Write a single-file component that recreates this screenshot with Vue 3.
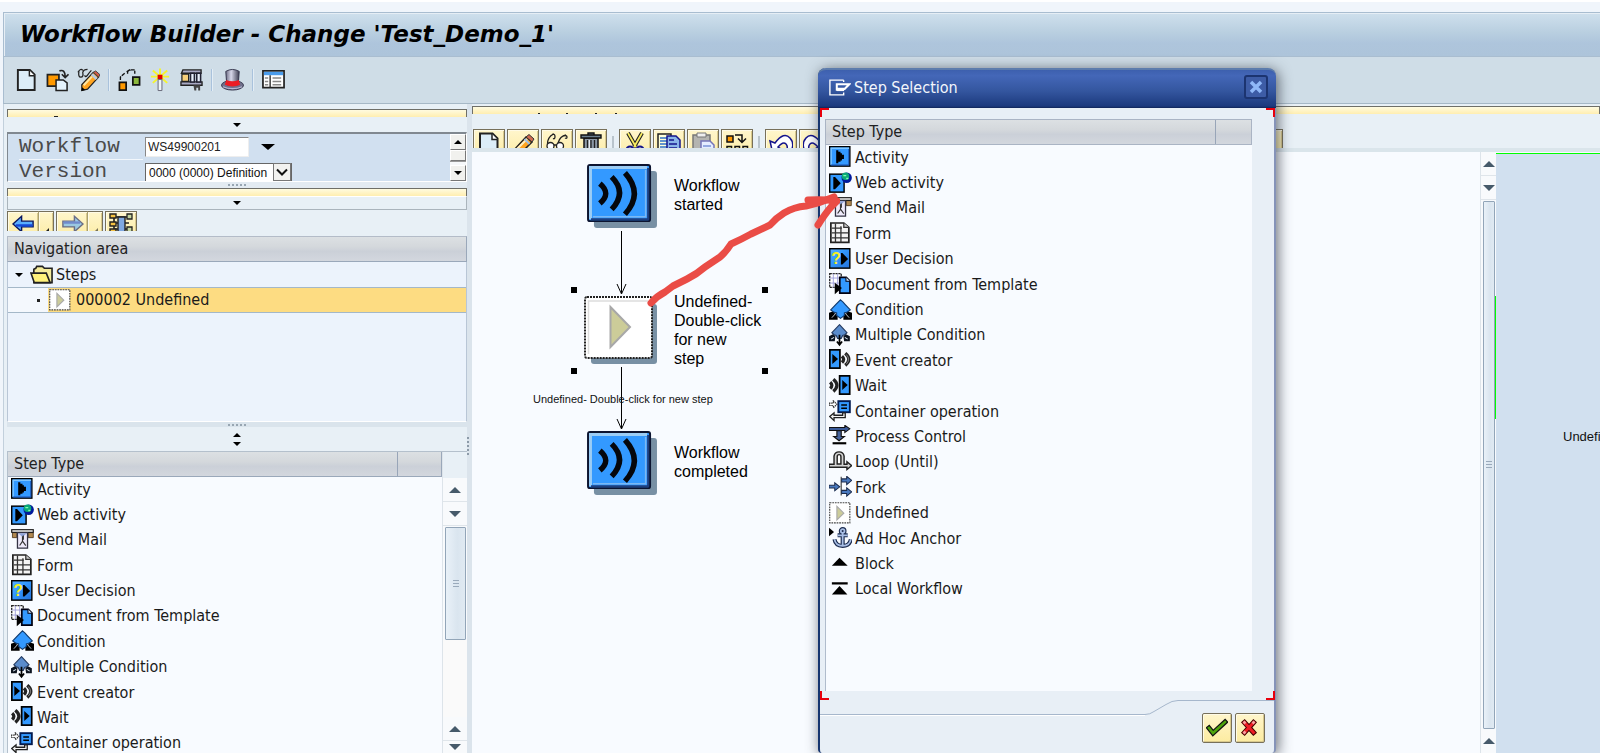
<script setup>
import { ref } from 'vue'

const steps = [
  ['activity', 'Activity'],
  ['web', 'Web activity'],
  ['mail', 'Send Mail'],
  ['form', 'Form'],
  ['decision', 'User Decision'],
  ['template', 'Document from Template'],
  ['condition', 'Condition'],
  ['multi', 'Multiple Condition'],
  ['event', 'Event creator'],
  ['wait', 'Wait'],
  ['container', 'Container operation'],
  ['process', 'Process Control'],
  ['loop', 'Loop (Until)'],
  ['fork', 'Fork'],
  ['undefined', 'Undefined'],
  ['anchor', 'Ad Hoc Anchor'],
  ['block', 'Block'],
  ['local', 'Local Workflow'],
]
const visibleSteps = steps.slice(0, 11)
const appTools = [
  ['t-new', 'Create'], ['t-copy', 'Other workflow'], ['t-edit', 'Display / Change'], null,
  ['t-graph', 'Diagram'], ['t-activate', 'Activate'], ['t-test', 'Test'], null,
  ['t-hat', 'Header data'], null, ['t-list', 'Layout'],
]
const canvasTools = [
  ['t-new', 'New'], ['c-pen', 'Change'], ['c-glasses', 'Display'], ['c-trash', 'Delete'], null,
  ['c-cut', 'Cut'], ['c-copy', 'Copy'], ['c-paste', 'Paste'], ['c-insert', 'Insert'], null,
  ['c-undo', 'Undo'], ['c-redo', 'Redo'],
]
const workflowId = ref('WS49900201')
const version = ref('0000')
</script>

<template>
  <div class="app">
    <svg class="defs" aria-hidden="true">
      <defs>
        <linearGradient id="blueBox" x1="0" y1="0" x2="1" y2="1">
          <stop offset="0" stop-color="#5cb0ff" /><stop offset=".4" stop-color="#3399ff" /><stop offset="1" stop-color="#2471d8" />
        </linearGradient>
        <linearGradient id="hatFill" x1="0" x2="1">
          <stop offset="0" stop-color="#6c6c84" /><stop offset=".4" stop-color="#d8d8ea" /><stop offset="1" stop-color="#3c3c50" />
        </linearGradient>
        <symbol id="activity" viewBox="0 0 16 16">
          <rect x=".5" y=".5" width="14" height="13.5" fill="#39f" stroke="#000" />
          <path d="M1.5 13V1.5H14" fill="none" stroke="#7cc4ff" /><path d="M1.5 13.2h12.3V2" fill="none" stroke="#1c4fae" stroke-width=".7" />
          <path d="M5 3v9h1.5v-1H8v-1h1V9h1.4V6H9V5H8V4H6.500V3z" />
        </symbol>
        <symbol id="web" viewBox="0 0 16 16">
          <rect x=".5" y="1.500" width="10" height="12.500" fill="#39f" stroke="#000" />
          <path d="M3 3.500v8.500h1.200l4-4.200-4-4.300z" />
          <circle cx="12.300" cy="4" r="3.600" fill="#001a9c" /><circle cx="11.500" cy="3" r="2.600" fill="#08a878" />
          <path d="M10 2.500h2M12 4.500h1.500" stroke="#7fffb0" />
        </symbol>
        <symbol id="mail" viewBox="0 0 16 16">
          <path d="M1 2.500h14.500V6H12V3H4v3H1z" fill="#b08850" stroke="#533a1c" stroke-width=".6" />
          <rect x=".5" y=".5" width="15" height="1.800" fill="#fff" stroke="#111" stroke-width=".8" />
          <path d="M4.500 2.500h7v10.800h-7z" fill="#eeeafb" stroke="#334" stroke-width=".9" />
          <path d="M5 3h6L8 5.500z" fill="#8fa3d8" /><path d="M8 5v3.500l-2 3M8 8.500l2.300 3M8.600 4.500v3" fill="none" stroke="#333" stroke-width=".8" />
        </symbol>
        <symbol id="form" viewBox="0 0 16 16">
          <path d="M1.300.700h9l3.500 3v10.500H1.300z" fill="#f4f4f4" stroke="#222" stroke-width="1.200" />
          <path d="M10.300.700v3h3.500" fill="#ccc" stroke="#333" stroke-width=".9" />
          <path d="M4.500 1v13M8.300 3v11M2 4.300h7M2 7.500h11.500M2 11h11.500" fill="none" stroke="#333" stroke-width=".9" />
        </symbol>
        <symbol id="decision" viewBox="0 0 16 16">
          <rect x=".5" y=".5" width="14" height="13.500" fill="url(#blueBox)" stroke="#000" />
          <path d="M8.300 3.500v8h1l4-3.800-4-4.200z" />
          <text x="1.500" y="11.200" font-family="Liberation Sans, sans-serif" font-weight="bold" font-size="11" fill="#f6f022">?</text>
        </symbol>
        <symbol id="template" viewBox="0 0 16 16">
          <rect x=".5" y=".5" width="8" height="9.500" fill="#fff" stroke="#222" stroke-width=".9" stroke-dasharray="1.500 .5" />
          <path d="M3 .5V10M6 .5V10M.5 3.500h8M.5 7h8" stroke="#9a9ad8" stroke-width=".6" />
          <path d="M7.500 3h4.500l2.600 2.600V14H7.500z" fill="#39f" stroke="#001" stroke-width="1.200" /><path d="M11.800 3v2.800h2.800" fill="#cfe4ff" stroke="#001" stroke-width=".7" />
          <path d="M4 6.800l5 3.700-5 4.300z" />
        </symbol>
        <symbol id="condition" viewBox="0 0 16 16">
          <path d="M0 9.500l3-1 1 1.500 2 .5v4H0zM16 9.500l-3-1-1 1.500-2 .5v4h6z" />
          <path d="M8 .6L9.800 2.200 11 3.500 14.800 7.600 12.300 9.300 10.700 9.700V11.500L8 13.500 5.300 11.500V9.700L3.700 9.300 1.200 7.600 5 3.500z" fill="#39f" stroke="#113a6c" stroke-width=".8" />
          <path d="M2 13l2.500-2.800M14 13l-2.500-2.800" stroke="#dce8f4" stroke-width=".6" />
        </symbol>
        <symbol id="multi" viewBox="0 0 16 16">
          <path d="M0 8.500l3-1.500 1.500 1.500L4 12H0zM14.500 8.500L11.500 7 10 8.500l.5 3.500h4z" fill="#0c1420" />
          <path d="M7.300.5L12.500 6 11 7.500 9.500 8 8.500 10H6L5 8 3.500 7.500 2 6z" fill="#5a8ccc" stroke="#233a60" stroke-width=".8" />
          <path d="M7.300 7.500v6.500M5.500 12.200L7.300 14.500 9.100 12.200" fill="none" stroke="#000" stroke-width="1.200" />
          <path d="M1.500 10.500l2-1.200M13 10.500l-2-1.200" stroke="#dce8f4" stroke-width=".7" />
        </symbol>
        <symbol id="event" viewBox="0 0 16 16">
          <rect x=".6" y=".6" width="7" height="12.700" fill="#39f" stroke="#000" stroke-width="1.200" /><path d="M2.300 3.500v7L6.300 7z" />
          <path d="M9 5q2.400 2.200 0 4.400M11.300 3q5 4.200 0 8.400" fill="none" stroke="#222" stroke-width="2.300" />
          <path d="M12 3.800q3.200 3.400 0 6.800" fill="none" stroke="#aaa" stroke-width=".5" />
        </symbol>
        <symbol id="wait" viewBox="0 0 16 16">
          <rect x="7.400" y=".6" width="7" height="12.700" fill="#39f" stroke="#000" stroke-width="1.200" /><path d="M9.200 3.500v7L13 7z" />
          <path d="M.8 5q2.400 2.200 0 4.400M3 3q5 4.200 0 8.400" fill="none" stroke="#222" stroke-width="2.300" />
        </symbol>
        <symbol id="container" viewBox="0 0 16 16">
          <rect x="6.500" y=".8" width="8" height="7.700" fill="#39f" stroke="#001a50" stroke-width="1.300" /><path d="M8.500 3.500h4M8.500 5.700h4" stroke="#000" stroke-width="1.100" />
          <path d="M0 2.200h3V.6L5.500 3 3 5.400V3.800H0z" fill="#fff" stroke="#333" stroke-width=".8" stroke-dasharray="1 .5" />
          <path d="M11.300 9v3.300H3.500v2L.5 11.500 3.500 9v1.600h6V9z" fill="#f4f4f4" stroke="#222" stroke-width=".9" />
        </symbol>
        <symbol id="process" viewBox="0 0 16 16">
          <path d="M0 1.700h11V.2l3.500 2.500L11 5.300V3.900H0z" fill="#3a5a98" stroke="#111" stroke-width=".7" />
          <path d="M5.500 4h3v4h2.200L7 11 3.300 8h2.200z" fill="#47659e" stroke="#111" stroke-width=".8" /><path d="M2.500 12.700h9.500" stroke="#000" stroke-width="1.500" />
        </symbol>
        <symbol id="loop" viewBox="0 0 16 16">
          <path d="M0 9.200h3.500V3.500Q4 .6 7 .6t3.500 2.900v5.700h2V7.500l3.300 2.700-3.300 2.700v-1.600H0z" fill="#d4d4d4" stroke="#222" stroke-width="1" />
          <path d="M5.700 9V4q0-1.500 1.300-1.500T8.300 4v5z" fill="#fff" stroke="#222" stroke-width="1" />
        </symbol>
        <symbol id="fork" viewBox="0 0 16 16">
          <path d="M8.500.5v13" stroke="#555" stroke-width=".9" />
          <path d="M0 6.500h4V4.700L7.500 7.500 4 10.200V8.400H0zM8.800 2h3.500V.2l3.500 2.900-3.500 2.900V4.200H8.800zM8.800 10h3.500V8.200l3.500 2.900-3.500 2.900v-1.800H8.800z" fill="#4a7ac0" stroke="#1c2c4c" stroke-width=".7" />
        </symbol>
        <symbol id="undefined" viewBox="0 0 16 16">
          <rect x=".5" y=".5" width="14" height="14" fill="#fff" stroke="#444" stroke-width=".8" stroke-dasharray="1.200 .6" />
          <path d="M5.500 3v9.500l4.800-4.700z" fill="#cccc99" stroke="#aaa" stroke-width=".8" />
        </symbol>
        <symbol id="anchor" viewBox="0 0 16 16">
          <path d="M0 .5v6L3.500 3.500z" />
          <g fill="none" stroke="#1c2c50" stroke-width="2.800"><circle cx="9.500" cy="2.700" r="1.300" /><path d="M9.500 4v9M6 5.800h7M3.800 8.500q.7 4.500 5.700 4.700 5-.2 5.700-4.700" /></g>
          <g fill="none" stroke="#a9bfe6" stroke-width="1.200"><circle cx="9.500" cy="2.700" r="1.300" /><path d="M9.500 4v9M6 5.800h7M3.800 8.500q.7 4.500 5.700 4.700 5-.2 5.700-4.700" /></g>
        </symbol>
        <symbol id="block" viewBox="0 0 16 16"><path d="M7.300 4L13 9.500H2z" /></symbol>
        <symbol id="local" viewBox="0 0 16 16"><path d="M2 3h11v1.600H2zM7.300 5.500L12.800 11.500H2z" /></symbol>

        <symbol id="t-new" viewBox="0 0 24 24">
          <path d="M3 1.500h12.500l5 5v16H3z" fill="#dcedf8" stroke="#222" stroke-width="2" /><path d="M15 2v5.500h5.500" fill="#fff" stroke="#222" stroke-width="1.500" />
        </symbol>
        <symbol id="t-copy" viewBox="0 0 24 24">
          <path d="M1.500 6.500h12v12h-12z" fill="#f90" stroke="#222" stroke-width="1.800" />
          <path d="M10.500 12h7.500l4 3v8H10.500z" fill="#e4f2fc" stroke="#222" stroke-width="1.600" />
          <path d="M14 2.500q6-2 6 6M16.500 6l3.500 3.500L23.500 6" fill="none" stroke="#222" stroke-width="1.700" />
        </symbol>
        <symbol id="t-edit" viewBox="0 0 24 24">
          <path d="M1 4q3-5 5-2M2 3q-1 6 2 6t2-5q1-3 5-3M8 7q1 3 3 0t4-5" fill="none" stroke="#222" stroke-width="1.300" />
          <path d="M5 17L17 4l5.500 5L11 21.500l-6 1.500z" fill="#ffa420" stroke="#222" stroke-width="1.300" />
          <path d="M17 4l2.500-1.500L24 6.500 22.500 9z" fill="#d25b48" stroke="#444" /><path d="M15.500 6l5 5" stroke="#b9cadf" stroke-width="3" /><path d="M7 17.500l8.500-9" stroke="#ffe5a0" stroke-width="2.200" /><path d="M4.500 23.500l1-4 3 3z" />
        </symbol>
        <symbol id="t-graph" viewBox="0 0 24 24">
          <path d="M1.500 14.500h7v8h-7z" fill="#f90" stroke="#111" stroke-width="1.800" /><path d="M15.500 9h7v8h-7z" fill="#8cb83c" stroke="#111" stroke-width="1.800" />
          <path d="M2.500 12V9l5-4.500M9 3.500l3-2h5.500v4M10 5.500V3l3-1.500" fill="none" stroke="#111" stroke-width="1.400" stroke-dasharray="4 1" />
        </symbol>
        <symbol id="t-activate" viewBox="0 0 24 24">
          <path d="M11.500 0v22M2 8.500h19M4 2l15 13M19 2L4 15" stroke="#f5f52c" stroke-width="2" />
          <path d="M9 6.500h5v5H9z" fill="#e00000" /><path d="M9.500 11.500h4V23h-4z" fill="#eef4fa" stroke="#667" />
        </symbol>
        <symbol id="t-test" viewBox="0 0 24 24">
          <path d="M3 1.500h19v3.500H1.500zM1 14h22v3.500H1z" fill="#a9a9c4" stroke="#222" stroke-width="1.400" />
          <path d="M2 6h7v7.500H2z" fill="#f6cf7a" stroke="#222" stroke-width="1.300" /><path d="M11 5h4v9h-4zM17.500 5h4v9h-4z" fill="#e8effa" stroke="#223" stroke-width="1.600" />
          <path d="M14 17.500h7V23h-2v-3h-2v3h-2z" fill="#444" />
        </symbol>
        <symbol id="t-hat" viewBox="0 0 24 24">
          <ellipse cx="12" cy="17.500" rx="11.500" ry="5" fill="#70708c" stroke="#33334a" />
          <path d="M5 3Q12-1 19 3L18 17H6z" fill="url(#hatFill)" stroke="#33334a" />
          <path d="M5.500 12q6.500 2.500 13 0l1.500 5q-8 3.500-16 0z" fill="#ec1c24" /><path d="M2 19q10 4 20 0" fill="none" stroke="#b7b7d2" stroke-width="1.300" />
        </symbol>
        <symbol id="t-list" viewBox="0 0 24 24">
          <path d="M1 2.500h22v17.500H1z" fill="#fff" stroke="#222" stroke-width="1.800" /><path d="M2 3.500h20V7H2z" fill="#4a9cec" /><path d="M8.500 7v12.500" stroke="#333" stroke-width="1.500" />
          <path d="M3 10h3.500M3 13.500h3.500M3 17h3.500M11 10h9M11 13.500h9M11 17h9" stroke="#888" stroke-width="1.600" />
        </symbol>

        <symbol id="c-pen" viewBox="0 0 24 24">
          <path d="M3 18L15 5l6 5-12 12-7 1.500z" fill="#ffa420" stroke="#222" stroke-width="1.500" /><path d="M15 5l3-2.500 5 4.500-2 3z" fill="#d06a50" stroke="#333" /><path d="M5 18L16 7" stroke="#fff0c0" stroke-width="2" /><path d="M13.500 7l5 5" stroke="#9cc0e8" stroke-width="2" />
        </symbol>
        <symbol id="c-glasses" viewBox="0 0 24 24">
          <path d="M2.500 12q0-7 6-10M7 2.500q3-1 3 2t-2 2M13 11q2-7 8-8M18 4q4-1 4 1t-2 1M8.500 13l3 0" fill="none" stroke="#222" stroke-width="1.300" /><circle cx="5.500" cy="14" r="3.500" fill="#fff" stroke="#222" stroke-width="1.300" /><circle cx="15" cy="14" r="3.500" fill="#fff" stroke="#222" stroke-width="1.300" />
        </symbol>
        <symbol id="c-trash" viewBox="0 0 24 24">
          <path d="M5 6h14v18H5z" fill="#8a97a5" stroke="#111" stroke-width="1.500" /><path d="M2 3h20v3H2zM9 1h6v2H9z" fill="#6c8090" stroke="#111" stroke-width="1.400" /><path d="M8.500 8v16M12 8v16M15.500 8v16" stroke="#222" stroke-width="1.300" /><path d="M10.300 8v16" stroke="#fff" />
        </symbol>
        <symbol id="c-cut" viewBox="0 0 24 24">
          <path d="M5 1l8 14M19 1l-8 14" stroke="#222" stroke-width="4" /><path d="M5 1l8 14M19 1l-8 14" stroke="#f8ec60" stroke-width="1.800" /><circle cx="7" cy="18" r="3.500" fill="none" stroke="#14148c" stroke-width="2" /><circle cx="17" cy="18" r="3.500" fill="none" stroke="#14148c" stroke-width="2" />
        </symbol>
        <symbol id="c-copy" viewBox="0 0 24 24">
          <path d="M1 2h13v18H1z" fill="#ffffd8" stroke="#222" stroke-width="1.500" /><path d="M3 6h8M3 9h8M3 12h8M3 15h8" stroke="#2f71c8" stroke-width="1.500" /><path d="M10 4h9l4 4v16H10z" fill="#8ab4e8" stroke="#14148c" stroke-width="1.500" /><path d="M12 8h5M12 12h8M12 16h8" stroke="#14148c" stroke-width="1.500" />
        </symbol>
        <symbol id="c-paste" viewBox="0 0 24 24">
          <path d="M2 3h17v19H2z" fill="#b4b4b0" stroke="#777" stroke-width="1.500" /><path d="M6 1h9v4H6z" fill="#eee" stroke="#777" /><path d="M10 9h9l4 4v11H10z" fill="#e4ecff" stroke="#7474b8" stroke-width="1.500" /><path d="M12 14h8M12 17h8" stroke="#7a92d8" stroke-width="1.500" />
        </symbol>
        <symbol id="c-insert" viewBox="0 0 24 24">
          <path d="M2 4h6v6H2z" fill="#f90" stroke="#111" stroke-width="1.500" /><path d="M10 3h7v6M13 6.500l4 4 4-4M2 14.500h4.500v7H2zM10 14.500h4.500v7H10zM18 14.500h4.500v7H18z" fill="none" stroke="#111" stroke-width="1.500" /><path d="M3 15.500h2.500v5H3z" fill="#8cb83c" />
        </symbol>
        <symbol id="c-undo" viewBox="0 0 24 24">
          <path d="M1 9l2 9 9-1-3-2q5-6 8-3t-1 9l4 1q7-9 1-16T6 11z" fill="#fff" stroke="#14148c" stroke-width="1.500" />
        </symbol>
        <symbol id="c-redo" viewBox="0 0 24 24">
          <path d="M23 9l-2 9-9-1 3-2q-5-6-8-3t1 9l-4 1Q-3 13 3 6t15 5z" fill="#fff" stroke="#14148c" stroke-width="1.500" />
        </symbol>
        <symbol id="n-back" viewBox="0 0 24 18">
          <path d="M1 9l9-8v5h12v6H10v5z" fill="#5aaeff" stroke="#0a1660" stroke-width="1.500" /><path d="M4 10.500h17.500" stroke="#1448d8" stroke-width="2.500" />
        </symbol>
        <symbol id="n-overview" viewBox="0 0 24 24">
          <path d="M5 4h15M5 10h15M5 16h15M5 4v18" stroke="#222" stroke-width="1.600" /><path d="M1 1h6v4H1zM1 9h6v4H1zM1 16h6v5H1z" fill="#f5c242" stroke="#222" stroke-width="1.400" /><path d="M9 4h7v17H9z" fill="#7fa8e0" stroke="#222" stroke-width="1.400" /><path d="M18 1h5v5h-5zM18 14h5v5h-5z" fill="#c8d8a0" stroke="#222" stroke-width="1.300" />
        </symbol>
        <symbol id="folder" viewBox="0 0 24 20">
          <path d="M4 18V4l2-1 1-2h6l2 2h8v15z" fill="#f5ec9c" stroke="#222" stroke-width="1.700" /><path d="M1 8h16l4 10H4.500z" fill="#fff27c" stroke="#222" stroke-width="1.700" />
        </symbol>
        <symbol id="eventNode" viewBox="0 0 72 66">
          <rect x="7" y="7" width="64" height="58" rx="3" fill="#7890a4" />
          <rect x="1" y="1" width="63" height="57" rx="2" fill="#39f" stroke="#0c1430" stroke-width="2" />
          <path d="M3.500 56V3.500H61" fill="none" stroke="#9ccdf5" stroke-width="3" /><path d="M4 56h58V4" fill="none" stroke="#1d3f80" stroke-width="2" /><path d="M6 53.500h53.500V6" fill="none" stroke="#7bb8f4" stroke-width="1.500" />
          <path d="M13 20q12 10 0 20M25 13q16 16 0 33M38.500 9q19 21 0 42" fill="none" stroke="#05070c" stroke-width="5.500" />
        </symbol>
      </defs>
    </svg>

    <header class="title-bar"><h1>Workflow Builder - Change 'Test_Demo_1'</h1></header>
    <nav class="app-toolbar" aria-label="Application toolbar">
      <template v-for="(t, i) in appTools" :key="i">
        <button v-if="t" class="flat" type="button" :aria-label="t[1]"><svg><use :href="'#' + t[0]" /></svg></button>
        <span v-else class="sep"></span>
      </template>
    </nav>

    <div class="workspace">
      <aside class="side">
        <div class="yellow-bar left-marks"></div>
        <div class="strip"><i class="tri down"></i></div>
        <form class="fields" @submit.prevent>
          <div class="rows">
            <div class="field">
              <label for="wf">Workflow</label>
              <input id="wf" v-model="workflowId" type="text">
              <i class="tri big down"></i>
            </div>
            <div class="field">
              <label for="ver">Version</label>
              <span class="select">
                <select id="ver" v-model="version"><option value="0000">0000 (0000) Definition</option></select>
                <svg viewBox="0 0 16 16"><path d="M3 5.500l5 5 5-5" fill="none" stroke="#111" stroke-width="2" /></svg>
              </span>
            </div>
          </div>
          <div class="classic-scroll">
            <button type="button" aria-label="Scroll up"><i class="tri up"></i></button>
            <span class="thumb"></span>
            <button type="button" aria-label="Scroll down"><i class="tri down"></i></button>
          </div>
        </form>
        <div class="splitter"><i class="grip"></i></div>
        <div class="yellow-bar"></div>
        <div class="strip boxed"><i class="tri down"></i></div>
        <div class="nav-tools">
          <button type="button" class="btn arrow" aria-label="Back"><svg><use href="#n-back" /></svg></button>
          <button type="button" class="btn more" aria-label="Back history"><i></i></button>
          <button type="button" class="btn arrow dim flip" aria-label="Forward"><svg><use href="#n-back" /></svg></button>
          <button type="button" class="btn more dim" aria-label="Forward history"><i></i></button>
          <button type="button" class="btn overview" aria-label="Overview"><svg><use href="#n-overview" /></svg></button>
        </div>
        <h2 class="head">Navigation area</h2>
        <ul class="tree">
          <li class="node"><i class="tri down"></i><svg><use href="#folder" /></svg><span>Steps</span></li>
          <li class="leaf"><i class="dot"></i><div class="chosen"><svg><use href="#undefined" /></svg><span>000002 Undefined</span></div></li>
        </ul>
        <div class="splitter"><i class="grip"></i></div>
        <div class="strip tall"><i class="tri up"></i><i class="tri down"></i></div>
        <section class="types">
          <div class="list-pane">
            <h2 class="head cols"><span>Step Type</span><i></i></h2>
            <div class="clip">
              <ul class="step-list part">
                <li v-for="s in visibleSteps" :key="s[0]"><svg><use :href="'#' + s[0]" /></svg>{{ s[1] }}</li>
              </ul>
            </div>
          </div>
          <div class="scroll">
            <button type="button" aria-label="Scroll up"><i class="tri big up"></i></button>
            <button type="button" aria-label="Scroll down"><i class="tri big down"></i></button>
            <span class="thumb short"><i></i></span>
            <span class="space"></span>
            <button type="button" aria-label="Line up"><i class="tri big up"></i></button>
            <button class="last" type="button" aria-label="Line down"><i class="tri big down"></i></button>
          </div>
        </section>
      </aside>

      <div class="divider"><i></i></div>

      <main class="main">
        <div class="yellow-bar main-marks"></div>
        <div class="canvas-tools">
          <template v-for="(t, i) in canvasTools" :key="i">
            <button v-if="t" class="btn" type="button" :aria-label="t[1]"><svg><use :href="'#' + t[0]" /></svg></button>
            <span v-else class="sep"></span>
          </template>
          <button class="btn far" type="button" aria-label="More"></button>
        </div>
        <div class="stage">
          <div class="canvas">
            <svg class="lines" width="340" height="400">
              <g fill="none" stroke="#000"><path d="M149.500 79v62M145 132l4.500 10 4.500-10M149.500 215v61M145 267l4.500 10 4.500-10" /></g>
              <g><path d="M99 135h6v6h-6zM290 135h6v6h-6zM99 216h6v6h-6zM290 216h6v6h-6z" /></g>
            </svg>
            <svg class="box n1"><use href="#eventNode" /></svg>
            <svg class="box n2" viewBox="0 0 75 70">
              <rect x="7" y="8" width="66" height="60" rx="3" fill="#7890a4" />
              <rect x="1" y="1" width="67" height="61" rx="2" fill="#fff" stroke="#222" stroke-width="2" stroke-dasharray="2 1" />
              <path d="M4.500 58V5H64" fill="none" stroke="#ddd" stroke-width="1.500" />
              <path d="M26.500 11v40L46 31z" fill="#cccc99" stroke="#a8a8a8" stroke-width="2" />
            </svg>
            <svg class="box n3"><use href="#eventNode" /></svg>
            <p class="label l1">Workflow<br>started</p>
            <p class="label l2">Undefined-<br>Double-click<br>for new<br>step</p>
            <p class="edge">Undefined- Double-click for new step</p>
            <p class="label l3">Workflow<br>completed</p>
          </div>
          <div class="scroll narrow">
            <button type="button" aria-label="Scroll up"><i class="tri big up"></i></button>
            <button type="button" aria-label="Scroll down"><i class="tri big down"></i></button>
            <span class="thumb fill"><i></i></span>
            <button class="foot" type="button" aria-label="Line up"><i class="tri big up"></i></button>
            <span class="view-mark"></span>
          </div>
          <div class="overview-pane"><p>Undefi</p></div>
        </div>
      </main>
    </div>

    <section class="dialog" role="dialog" aria-labelledby="dlg-title">
      <header>
        <svg class="dlg-icon" viewBox="0 0 24 18"><path d="M16 1H1v16h15v-2.500M16 1v2" fill="none" stroke="#fff" stroke-width="1.500" /><path d="M8.500 12.500v-7H22l-5 5H9" fill="none" stroke="#fff" stroke-width="2.200" /><path d="M8.500 12h8" stroke="#fff" stroke-width="1.800" /></svg>
        <h2 id="dlg-title">Step Selection</h2>
        <button type="button" aria-label="Close"><svg viewBox="0 0 14 14"><path d="M2 2l10 10M12 2L2 12" stroke="#8fb8f8" stroke-width="3.500" /></svg></button>
      </header>
      <div class="dlg-body">
        <i class="corner tl"></i><i class="corner tr"></i><i class="corner bl"></i><i class="corner br"></i>
        <h3 class="head cols"><span>Step Type</span><i></i></h3>
        <div class="dlg-list">
          <ul class="step-list">
            <li v-for="s in steps" :key="s[0]"><svg><use :href="'#' + s[0]" /></svg>{{ s[1] }}</li>
          </ul>
        </div>
      </div>
      <footer>
        <svg class="curve" viewBox="0 0 454 16" fill="none"><path d="M0 14.500h325q5 0 9-3l12-7q6-4 12-4h96" stroke="#a6b7cc" /><path d="M0 15.500h325" stroke="#fff" /></svg>
        <div class="actions">
          <button class="btn" type="button" aria-label="Continue"><svg viewBox="0 0 22 20"><path d="M3 10l4 5L19 4" fill="none" stroke="#111" stroke-width="5" stroke-linecap="square" /><path d="M3 10l4 5L19 4" fill="none" stroke="#4ea40c" stroke-width="2.600" stroke-linecap="square" /></svg></button>
          <button class="btn" type="button" aria-label="Cancel"><svg viewBox="0 0 22 20"><path d="M5.500 4.500l9 10M14.500 4.500L5.500 14.500" stroke="#400" stroke-width="5" stroke-linecap="square" /><path d="M5.500 4.500l9 10M14.500 4.500L5.500 14.500" stroke="#ee1c24" stroke-width="3" stroke-linecap="square" /><path d="M4.500 3.500l2 2M15.500 3.500l-2 2M4.500 15.500l2-2" stroke="#f8a0a0" stroke-width="2.500" /></svg></button>
        </div>
      </footer>
    </section>

    <svg class="marker" viewBox="0 0 200 120" fill="none" stroke="#ea4c46" stroke-width="7" stroke-linecap="round" stroke-linejoin="round">
      <path d="M11 113q6-7 14-11l8-6 14-7q10-5 18-12l15-10q6-5 11-13 11-5 20-10l19-9q6-7 14-12 10-6 22-7 14-3 28-9" />
      <path d="M168 10q15-1 29 1l-6 6q-6 7-13 18" />
    </svg>
  </div>
</template>

<style>
body { margin: 0; }
</style>

<style scoped>
.app { position: relative; height: 100vh; overflow: hidden; display: flex; flex-direction: column; box-sizing: border-box; padding-top: 12px; background: linear-gradient(#fff 2px, #f0f5fb 2px); font: 16px/20px "DejaVu Sans Condensed", Tahoma, sans-serif; color: #1a1a1a; }
.app *, .app *::before { box-sizing: border-box; }
h1, h2, h3, p, ul { margin: 0; padding: 0; list-style: none; font-weight: normal; font-size: inherit; }
button { padding: 0; margin: 0; font: inherit; background: none; border: 0; display: flex; align-items: center; justify-content: center; }
svg { display: block; flex: none; }
i { display: block; flex: none; }
.defs { position: absolute; width: 0; height: 0; }

.title-bar { flex: none; height: 45px; margin-left: 3px; padding-left: 16px; display: flex; align-items: center; border: 1px solid #a9bdd0; border-right: 0; box-shadow: inset 1px 1px #e6eef5; background: linear-gradient(#cfe0ed, #b9cfe0 45%, #aec5dc 70%, #adc4da); }
h1 { font: italic bold 23px/28px "DejaVu Sans", Verdana, sans-serif; color: #000; white-space: nowrap; padding-bottom: 2px; }
.app-toolbar { flex: none; height: 47px; margin-left: 3px; padding-left: 11px; display: flex; align-items: center; gap: 8px; background: #cfdde7; border-bottom: 1px solid #a6b8c6; border-left: 1px solid #a9bdd0; }
.flat svg { width: 23px; height: 24px; }
.app-toolbar .sep { width: 2px; height: 22px; background: linear-gradient(90deg, #a9c2dc 1px, #e3edf5 1px); }

.workspace { flex: 1; min-height: 0; display: flex; margin-left: 3px; border-left: 1px solid #c2d0dc; background: #e8f0f6; }
.side { width: 463px; flex: none; display: flex; flex-direction: column; padding: 5px 0 0 3px; }
.yellow-bar { flex: none; height: 8px; border: 1px solid #6f6f68; border-bottom: 0; background: linear-gradient(#fffbe0, #ffeeb0); }
.left-marks { background: linear-gradient(#222, #222) no-repeat 46px 6px / 4px 1px, linear-gradient(#fffbe0, #ffeeb0); }
.main-marks { background: linear-gradient(#222, #222) no-repeat 65px 6px / 2px 1px, linear-gradient(#222, #222) no-repeat 93px 6px / 2px 1px, linear-gradient(#222, #222) no-repeat 122px 6px / 2px 1px, linear-gradient(#222, #222) no-repeat 142px 6px / 2px 1px, linear-gradient(#fffbe0, #ffeeb0); }
.strip { flex: none; height: 15px; display: flex; flex-direction: column; align-items: center; justify-content: center; }
.strip.boxed { height: 14px; border: 1px solid #aab4bc; border-top-color: #fff; }
.strip.tall { height: 24px; gap: 5px; }
.tri { width: 0; height: 0; border: 4px solid transparent; }
.tri.down { border-top-color: #000; border-bottom: 0; }
.tri.up { border-bottom-color: #000; border-top: 0; }
.tri.big { border-width: 6px; }
.tri.big.down { border-bottom-width: 0; }
.tri.big.up { border-top-width: 0; }

.fields { flex: none; height: 50px; display: flex; background: #d1e0f0; border: 2px solid #808890; border-width: 2px 1px 1px 1px; border-right-color: #fff; border-bottom-color: #fff; overflow: hidden; }
.rows { flex: 1; padding-left: 11px; }
.field { height: 25px; display: flex; align-items: center; padding-top: 1px; }
.field + .field { background: linear-gradient(#f2f7fc, #f2f7fc) no-repeat 0 0 / 124px 1px; }
.field label { width: 126px; font: 21px/24px "Liberation Mono", monospace; color: #4a4a4a; }
input { width: 104px; height: 20px; padding: 0 2px; border: 1px solid #888; border-right-color: #eee; border-bottom-color: #eee; background: #fff; font: 12px/16px "Liberation Sans", Arial, sans-serif; color: #222; }
.field .tri { margin-left: 12px; border-left-width: 7px; border-right-width: 7px; }
.select { position: relative; display: block; width: 147px; height: 20px; }
select { appearance: none; width: 100%; height: 20px; padding: 0 20px 0 3px; border: 1px solid #666; background: #fff; font: 12px/16px "Liberation Sans", Arial, sans-serif; color: #111; border-radius: 0; }
.select svg { position: absolute; right: 1px; top: 1px; width: 18px; height: 18px; background: #f2f2f0; border: 1px solid #777; pointer-events: none; }
.classic-scroll { width: 16px; display: flex; flex-direction: column; background: #f6f8fa; }
.classic-scroll button, .classic-scroll .thumb { height: 16px; background: #f1f1ee; border: 1px solid #fff; border-right-color: #777; border-bottom-color: #777; box-shadow: 0 1px #999; }
.classic-scroll .thumb { height: 11px; margin-bottom: 4px; }

.splitter { flex: none; height: 5px; background: #dae4ec; display: flex; justify-content: center; align-items: center; }
.fields + .splitter { height: 6px; background: #e3ebf2; }
.grip { width: 18px; height: 2px; background: repeating-linear-gradient(90deg, #98a6b2 0 2px, transparent 2px 4px); }
.nav-tools { flex: none; display: flex; height: 20px; margin: 1px 0 5px; overflow: hidden; align-items: flex-start; }
.btn { flex: none; border: 1px solid #77705a; box-shadow: inset 1px 1px #fffbe6, inset -1px -1px #d9c98c; background: linear-gradient(#fff6cc, #fceba0); }
.nav-tools .btn { height: 30px; }
.btn.arrow { width: 32px; align-items: flex-start; padding-top: 3px; border-right: 1px solid #a89f70; }
.btn.arrow svg { width: 23px; height: 18px; }
.btn.more { width: 15px; border-left: 0; margin-right: 2px; }
.btn.more i { width: 0; height: 0; border-left: 5px solid transparent; border-bottom: 5px solid #222; margin-top: 8px; }
.btn.dim svg, .btn.dim i { opacity: .6; }
.btn.flip svg { transform: rotate(180deg); }
.btn.overview { width: 32px; align-items: flex-start; padding-top: 1px; }
.btn.overview svg { width: 24px; height: 24px; }
.head { flex: none; height: 26px; padding-left: 6px; display: flex; align-items: center; border: 1px solid #b4bcc8; border-bottom-color: #9aa8ba; border-right-color: #9aa8ba; background: linear-gradient(#dce0e3, #d4d8dc 40%, #cbd0d8 60%, #d3d7de); color: #222; }
.tree { flex: none; height: 160px; background: #ecf3fc; border: 1px solid #b9c6d6; border-top: 0; border-bottom-color: #fff; }
.node { height: 26px; display: flex; align-items: center; padding-left: 7px; border-bottom: 1px solid #a4b8c8; }
.node svg { width: 23px; height: 20px; margin: 0 3px 0 7px; }
.leaf { height: 25px; display: flex; align-items: center; background: #f4f8fd; border-bottom: 1px solid #a4b8c8; }
.dot { width: 3px; height: 3px; margin: 0 8px 0 29px; background: #222; }
.chosen { flex: 1; height: 24px; display: flex; align-items: center; gap: 4px; padding-left: 1px; background: #fddc82; }
.chosen svg { width: 23px; height: 23px; }

.types { flex: 1; min-height: 0; display: flex; border-top: 1px solid #b4c0cc; }
.list-pane { flex: 1; display: flex; flex-direction: column; min-width: 0; border-left: 1px solid #b4c0cc; }
.head.cols { height: 25px; border-left: 0; border-top: 0; padding: 0 0 0 6px; }
.head.cols span { flex: 1; }
.head.cols i { width: 44px; height: 24px; border-left: 1px solid #98a5b8; }
.clip { flex: 1; min-height: 0; overflow: hidden; background: #f8fbff; }
.step-list { height: 457px; display: flex; flex-direction: column; }
.step-list.part { height: 279px; }
.step-list li { flex: 1; display: flex; align-items: center; gap: 3px; padding-left: 3px; white-space: nowrap; }
.step-list svg { width: 23px; height: 23px; }
.scroll { width: 25px; flex: none; display: flex; flex-direction: column; padding-top: 26px; border-left: 1px solid #dde4ea; background: #f8fafc; position: relative; }
.side .scroll { box-shadow: inset 0 26px #e8f0f6; }
.scroll button { flex: none; height: 24px; border-bottom: 1px solid #dfe5ea; }
.scroll .tri.down { border-top-color: #465a6a; }
.scroll .tri.up { border-bottom-color: #465a6a; }
.scroll .thumb { flex: none; margin: 1px 1px 0 2px; border: 1px solid #92a5b8; border-radius: 1px; background: linear-gradient(90deg, #e9f1f8, #dae5ef 60%, #e0eaf2); display: flex; align-items: center; justify-content: center; }
.thumb.short { height: 113px; }
.thumb i { width: 6px; height: 8px; background: repeating-linear-gradient(#9aaabb 0 1px, transparent 1px 3px); }
.scroll .space { flex: 1; background: #fafafa; }
.scroll .last { height: 12px; border: 0; }

.divider { flex: none; width: 5px; background: #dbe4ec; display: flex; align-items: flex-start; }
.divider i { width: 2px; height: 18px; margin-top: 333px; background: repeating-linear-gradient(#8c9aa8 0 2px, transparent 2px 4px); }
.main { flex: 1; min-width: 0; display: flex; flex-direction: column; padding-top: 2px; }
.canvas-tools { flex: none; display: flex; gap: 2px; align-items: flex-start; height: 38px; padding: 15px 0 0 1px; overflow: hidden; border-bottom: 4px solid #dae5eb; }
.canvas-tools .btn { width: 32px; height: 32px; align-items: flex-start; padding-top: 2px; }
.canvas-tools .far { margin-left: 418px; }
.canvas-tools svg { width: 24px; height: 24px; }
.canvas-tools .sep { width: 2px; height: 12px; margin: 7px 3px 0 3px; background: #b9c4cc; }
.stage { flex: 1; min-height: 0; display: flex; background: #f8fbff; }
.canvas { flex: 1; position: relative; }
.lines { position: absolute; left: 0; top: 0; }
.box { position: absolute; width: 71px; height: 65px; left: 115px; }
.n1 { top: 12px; }
.n2 { left: 112px; top: 144px; width: 75px; height: 70px; }
.n3 { top: 279px; }
.label { position: absolute; left: 202px; font: 16px/19px "Liberation Sans", Arial, sans-serif; color: #000; white-space: nowrap; }
.l1 { top: 24px; }
.l2 { top: 140px; }
.l3 { top: 291px; }
.edge { position: absolute; left: 61px; top: 240px; font: 11px/14px "Liberation Sans", Arial, sans-serif; white-space: nowrap; color: #111; }
.scroll.narrow { width: 16px; padding-top: 0; }
.scroll .fill { flex: 1; }
.scroll .foot { height: 24px; border: 0; }
.view-mark { position: absolute; right: 0; top: 144px; width: 1px; height: 123px; background: #0f0; }
.overview-pane { width: 104px; flex: none; margin-top: 1px; border-top: 1px solid #0f0; background: #d1e0ef; overflow: hidden; }
.overview-pane p { margin: 275px 0 0 67px; font: 13px/16px "Liberation Sans", Arial, sans-serif; color: #111; white-space: nowrap; }

.dialog { position: absolute; left: 818px; top: 68px; bottom: 0; width: 458px; display: flex; flex-direction: column; background: #e8eff6; border: 2px solid #16356f; border-top: 0; border-bottom: 0; border-right-color: #8593b8; border-radius: 8px 8px 4px 4px; box-shadow: 2px 2px 14px rgba(40, 45, 55, .7); }
.dialog header { flex: none; height: 40px; margin: 0 -2px; padding: 0 8px 3px 11px; display: flex; align-items: center; gap: 3px; background: linear-gradient(#3d60ae, #4467b8 15%, #34569f 55%, #1c3a7e 95%, #0f2558); border-top: 2px solid #5c7cac; border-radius: 8px 8px 0 0; color: #f3f6fc; }
.dlg-icon { width: 22px; height: 17px; }
.dialog header h2 { flex: 1; }
.dialog header button { width: 24px; height: 24px; margin-bottom: 2px; border: 2px solid #1c3470; border-radius: 3px; background: #3d5ca6; }
.dialog header button svg { width: 14px; height: 14px; }
.dlg-body { flex: 1; min-height: 0; position: relative; display: flex; flex-direction: column; padding: 11px 22px 9px 5px; }
.dlg-body .head.cols { height: 26px; border: 1px solid #aab4c4; }
.dlg-body .head.cols i { width: 36px; }
.dlg-list { flex: 1; min-height: 0; overflow: hidden; border-left: 1px solid #b0bccc; background: #f8fbff; }
.corner { position: absolute; width: 9px; height: 9px; border: 0 solid #e8000c; }
.tl { left: 0; top: 0; border-width: 2px 0 0 2px; }
.tr { right: -1px; top: 0; border-width: 2px 2px 0 0; }
.bl { left: 0; bottom: 0; border-width: 0 0 2px 2px; }
.br { right: -1px; bottom: 0; border-width: 0 2px 2px 0; }
.dialog footer { flex: none; height: 53px; position: relative; }
.curve { position: absolute; left: 0; top: 0; width: 100%; height: 16px; }
.actions { display: flex; justify-content: flex-end; gap: 3px; padding: 13px 9px 0 0; }
.actions .btn { width: 30px; height: 30px; border-radius: 2px; }
.actions svg { width: 22px; height: 20px; }
.marker { position: absolute; left: 640px; top: 190px; width: 200px; height: 120px; pointer-events: none; }
</style>
